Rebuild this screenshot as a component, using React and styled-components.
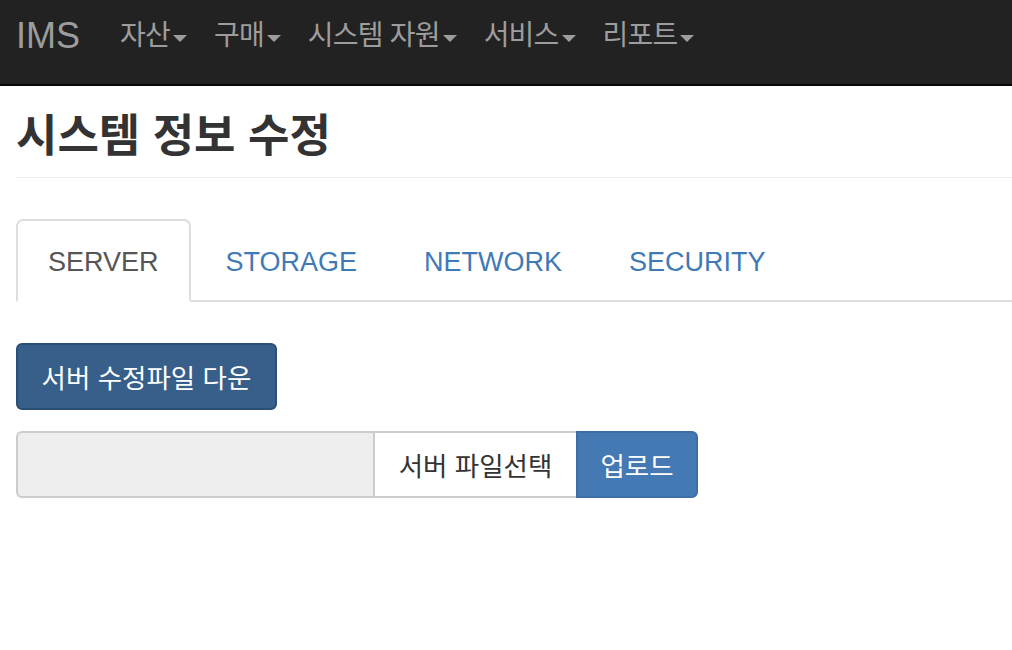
import React from "react";
import styled, { createGlobalStyle } from "styled-components";

const GlobalStyle = createGlobalStyle`
  body {
    margin: 0;
    background: #fff;
    font-family: "Liberation Sans", "Noto Sans CJK KR", sans-serif;
    color: #333;
  }
`;

const menus = ["자산", "구매", "시스템 자원", "서비스", "리포트"];
const tabs = ["SERVER", "STORAGE", "NETWORK", "SECURITY"];

function App() {
  return (
    <>
      <GlobalStyle />
      <Navbar>
        <Brand>IMS</Brand>
        <Menu>
          {menus.map((m) => (
            <MenuItem key={m}>
              {m}
              <Caret />
            </MenuItem>
          ))}
        </Menu>
      </Navbar>
      <Container>
        <Header>
          <Title>시스템 정보 수정</Title>
        </Header>
        <Tabs>
          {tabs.map((t, i) => (
            <Tab key={t} $active={i === 0}>
              {t}
            </Tab>
          ))}
        </Tabs>
        <DownloadButton>서버 수정파일 다운</DownloadButton>
        <InputGroup>
          <FileInput readOnly />
          <Addon>서버 파일선택</Addon>
          <UploadButton>업로드</UploadButton>
        </InputGroup>
      </Container>
    </>
  );
}

const Navbar = styled.nav`
  display: flex;
  align-items: flex-start;
  height: 86px;
  padding: 14px 0 0 16px;
  box-sizing: border-box;
  background: #222;
  border-bottom: 2px solid #080808;
`;

const Brand = styled.div`
  font-size: 36px;
  line-height: 44px;
  color: #9d9d9d;
  margin-right: 40px;
`;

const Menu = styled.div`
  display: flex;
  gap: 27px;
`;

const MenuItem = styled.div`
  display: flex;
  align-items: center;
  font-size: 28px;
  line-height: 44px;
  color: #9d9d9d;
  letter-spacing: -0.8px;
`;

const Caret = styled.span`
  width: 0;
  height: 0;
  margin-left: 3px;
  margin-top: 4px;
  border-left: 7px solid transparent;
  border-right: 7px solid transparent;
  border-top: 7px solid #9d9d9d;
`;

const Container = styled.div`
  padding-left: 16px;
`;

const Header = styled.div`
  padding: 24px 0 13px;
  border-bottom: 1px solid #eee;
`;

const Title = styled.h1`
  margin: 0;
  font-size: 45px;
  line-height: 54px;
  font-weight: bold;
  color: #333;
`;

const Tabs = styled.div`
  display: flex;
  margin-top: 41px;
  border-bottom: 2px solid #ddd;
`;

const Tab = styled.div`
  height: 83px;
  padding: 4px 30px 0;
  margin-right: 3px;
  margin-bottom: -2px;
  box-sizing: border-box;
  display: flex;
  align-items: center;
  font-size: 27px;
  border: 2px solid ${(p) => (p.$active ? "#ddd" : "transparent")};
  border-bottom-color: ${(p) => (p.$active ? "#fff" : "transparent")};
  border-radius: 7px 7px 0 0;
  color: ${(p) => (p.$active ? "#555" : "#3f7ab6")};
  background: ${(p) => (p.$active ? "#fff" : "transparent")};
`;

const DownloadButton = styled.button`
  display: block;
  margin-top: 41px;
  width: 261px;
  height: 67px;
  padding: 0;
  font-family: inherit;
  font-size: 26.5px;
  color: #fff;
  background: #375f8a;
  border: 2px solid #2b4e75;
  border-radius: 6px;
`;

const InputGroup = styled.div`
  display: flex;
  margin-top: 21px;
  height: 67px;
`;

const FileInput = styled.input`
  width: 357px;
  box-sizing: border-box;
  background: #eee;
  border: 2px solid #ccc;
  border-right: none;
  border-radius: 6px 0 0 6px;
  outline: none;
`;

const Addon = styled.div`
  width: 203px;
  display: flex;
  align-items: center;
  justify-content: center;
  box-sizing: border-box;
  font-size: 26.5px;
  color: #333;
  background: #fff;
  border: 2px solid #ccc;
  border-right: none;
`;

const UploadButton = styled.button`
  width: 122px;
  padding: 0;
  font-family: inherit;
  font-size: 26.5px;
  color: #fff;
  background: #4579b4;
  border: 2px solid #3d6ea5;
  border-radius: 0 6px 6px 0;
`;

export default App;
